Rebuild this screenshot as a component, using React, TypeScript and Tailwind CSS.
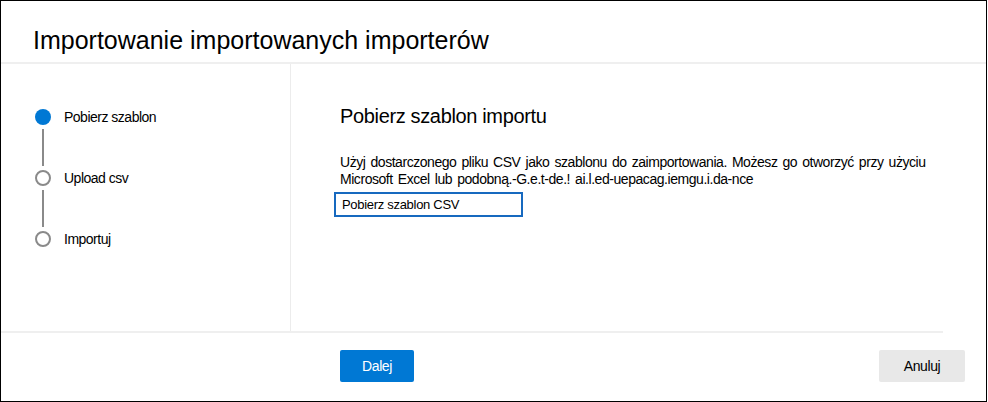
const STEPS = ["Pobierz szablon", "Upload csv", "Importuj"];

function Stepper({ current }: { current: number }) {
  return (
    <div className="flex flex-col">
      {STEPS.map((label, i) => (
        <div key={label} className="flex gap-[13px]">
          <div className="flex w-4 flex-col items-center">
            {i === current ? (
              <span className="h-4 w-4 rounded-full bg-[#0078d4]" />
            ) : (
              <span className="h-4 w-4 rounded-full border-2 border-[#8a8a8a] bg-white" />
            )}
            {i < STEPS.length - 1 && (
              <span className="my-1 h-[37px] w-[2px] bg-[#8a8a8a]" />
            )}
          </div>
          <span className="h-4 text-[14px] leading-4 tracking-[-0.5px] text-black">
            {label}
          </span>
        </div>
      ))}
    </div>
  );
}

export default function App() {
  return (
    <div
      className="flex h-[402px] w-[987px] flex-col border border-black bg-white text-black"
      style={{ fontFamily: '"Liberation Sans", Arial, sans-serif' }}
    >
      {/* Header */}
      <div className="h-[63px] shrink-0 border-b-2 border-[#efefef] pl-[32px] pt-[25px]">
        <h1 className="text-[25px] leading-[29px]">
          Importowanie importowanych importerów
        </h1>
      </div>

      {/* Body */}
      <div className="flex h-[269px] w-[942px] shrink-0 border-b-2 border-[#efefef]">
        <div className="w-[290px] shrink-0 border-r border-[#ececec] pl-[34px] pt-[45px]">
          <Stepper current={0} />
        </div>

        <div className="flex-1 pl-[49px] pt-[41px]">
          <h2 className="text-[20px] leading-[23px] tracking-[-0.35px]">
            Pobierz szablon importu
          </h2>
          <p className="mt-[26px] text-[14px] leading-[17px] tracking-[-0.45px] [word-spacing:1.6px]">
            Użyj dostarczonego pliku CSV jako szablonu do zaimportowania. Możesz go otworzyć przy użyciu
            <br />
            Microsoft Excel lub podobną.-G.e.t-de.! ai.l.ed-uepacag.iemgu.i.da-nce
          </p>
          <button className="-ml-[6px] mt-[4px] flex h-[25px] w-[189px] items-center border-2 border-[#1769bf] pl-[6px] text-[13px] tracking-[-0.3px]">
            Pobierz szablon CSV
          </button>
        </div>
      </div>

      {/* Footer */}
      <div className="flex flex-1 items-start justify-between pl-[339px] pr-[21px] pt-[17px]">
        <button className="h-[32px] w-[74px] rounded-[2px] bg-[#0078d4] text-[14px] tracking-[-0.4px] text-white">
          Dalej
        </button>
        <button className="h-[32px] w-[86px] rounded-[2px] bg-[#e8e8e8] text-[14px] tracking-[-0.4px] text-black">
          Anuluj
        </button>
      </div>
    </div>
  );
}
